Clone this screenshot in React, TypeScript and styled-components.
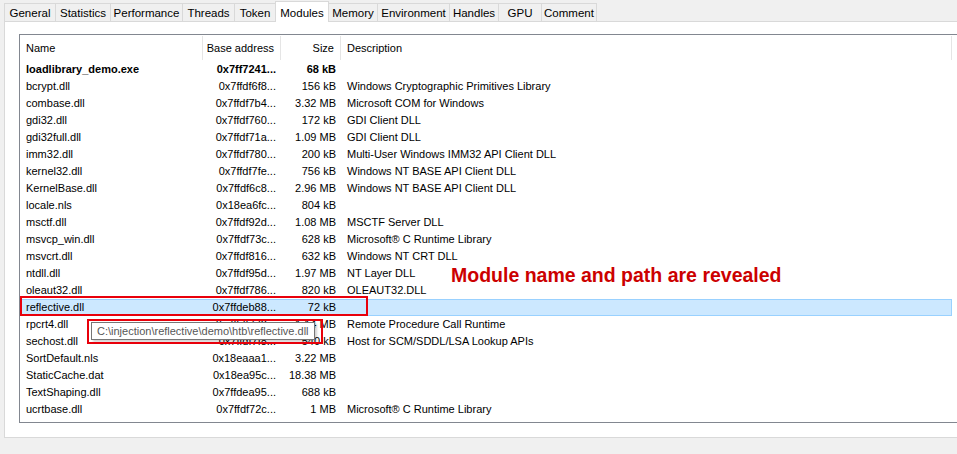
import React from "react";
import styled, { createGlobalStyle } from "styled-components";

const GlobalStyle = createGlobalStyle`
  html, body { margin: 0; padding: 0; background: #f0f0f0; }
  body { font-family: "Liberation Sans", Arial, sans-serif; font-size: 11px; color: #000; }
  * { box-sizing: border-box; }
`;

const Window = styled.div`
  position: relative;
  width: 957px;
  height: 454px;
  overflow: hidden;
  background: #f0f0f0;
`;

const TabStrip = styled.div`
  display: flex;
  align-items: flex-end;
  height: 21px;
  padding-left: 4px;
`;

const Tab = styled.div<{ $w: number; $active?: boolean }>`
  width: ${(p) => p.$w + 1}px;
  height: ${(p) => (p.$active ? 21 : 18)}px;
  margin-right: -1px;
  margin-bottom: ${(p) => (p.$active ? -1 : 0)}px;
  border: 1px solid #d9d9d9;
  border-bottom: none;
  background: ${(p) => (p.$active ? "#ffffff" : "#f0f0f0")};
  position: relative;
  z-index: ${(p) => (p.$active ? 2 : 1)};
  display: flex;
  align-items: ${(p) => (p.$active ? "flex-start" : "center")};
  padding-top: ${(p) => (p.$active ? 5 : 0)}px;
  justify-content: center;
  font-size: 11.5px;
  white-space: nowrap;
`;

const Panel = styled.div`
  margin-left: 4px;
  width: 1000px;
  height: 417px;
  background: #ffffff;
  border: 1px solid #d9d9d9;
  padding: 12px 0 0 14px;
`;

const ListView = styled.div`
  width: 980px;
  height: 389px;
  border: 1px solid #828790;
  background: #ffffff;
`;

const Header = styled.div`
  display: flex;
  height: 26px;
  padding-bottom: 1px;
`;

const HeaderCell = styled.div<{ $w: number; $right?: boolean }>`
  width: ${(p) => p.$w}px;
  flex: none;
  height: 24px;
  margin-top: 1px;
  padding: 0 6px;
  display: flex;
  align-items: center;
  justify-content: ${(p) => (p.$right ? "flex-end" : "flex-start")};
  border-right: 1px solid #e5e5e5;
  white-space: nowrap;
  overflow: hidden;
`;

const Row = styled.div<{ $selected?: boolean; $bold?: boolean }>`
  display: flex;
  width: 932px;
  height: 17px;
  border: 1px solid ${(p) => (p.$selected ? "#99d1ff" : "transparent")};
  background: ${(p) => (p.$selected ? "#cce8ff" : "transparent")};
  font-weight: ${(p) => (p.$bold ? 700 : 400)};
`;

const Cell = styled.div<{ $w: number; $right?: boolean }>`
  width: ${(p) => p.$w}px;
  flex: none;
  padding: 0 ${(p) => (p.$right ? 6 : 5)}px 0 ${(p) => (p.$right ? 0 : 5)}px;
  text-align: ${(p) => (p.$right ? "right" : "left")};
  line-height: 15px;
  white-space: nowrap;
  overflow: hidden;
`;

const Tooltip = styled.div`
  position: absolute;
  left: 91px;
  top: 322px;
  height: 18px;
  padding: 0 5px;
  display: flex;
  align-items: center;
  background: #ffffff;
  border: 1px solid #767676;
  color: #575757;
  font-size: 11px;
  white-space: nowrap;
  box-shadow: 2px 2px 2px rgba(0, 0, 0, 0.18);
  z-index: 5;
`;

const RedBox = styled.div<{ $x: number; $y: number; $w: number; $h: number }>`
  position: absolute;
  left: ${(p) => p.$x}px;
  top: ${(p) => p.$y}px;
  width: ${(p) => p.$w}px;
  height: ${(p) => p.$h}px;
  border: 2px solid #e8000b;
  z-index: 6;
  pointer-events: none;
`;

const Annotation = styled.div`
  position: absolute;
  left: 451px;
  top: 264px;
  font-family: "Liberation Sans", Arial, sans-serif;
  font-weight: 700;
  font-size: 19.5px;
  color: #cc0000;
  white-space: nowrap;
  z-index: 6;
`;

const tabs: [string, number][] = [
  ["General", 51],
  ["Statistics", 55],
  ["Performance", 72],
  ["Threads", 52],
  ["Token", 41],
  ["Modules", 53],
  ["Memory", 49],
  ["Environment", 72],
  ["Handles", 49],
  ["GPU", 43],
  ["Comment", 55],
];

const cols = { name: 183, base: 78, size: 60, desc: 611 };

type Mod = [string, string, string, string];

const modules: Mod[] = [
  ["loadlibrary_demo.exe", "0x7ff7241...", "68 kB", ""],
  ["bcrypt.dll", "0x7ffdf6f8...", "156 kB", "Windows Cryptographic Primitives Library"],
  ["combase.dll", "0x7ffdf7b4...", "3.32 MB", "Microsoft COM for Windows"],
  ["gdi32.dll", "0x7ffdf760...", "172 kB", "GDI Client DLL"],
  ["gdi32full.dll", "0x7ffdf71a...", "1.09 MB", "GDI Client DLL"],
  ["imm32.dll", "0x7ffdf780...", "200 kB", "Multi-User Windows IMM32 API Client DLL"],
  ["kernel32.dll", "0x7ffdf7fe...", "756 kB", "Windows NT BASE API Client DLL"],
  ["KernelBase.dll", "0x7ffdf6c8...", "2.96 MB", "Windows NT BASE API Client DLL"],
  ["locale.nls", "0x18ea6fc...", "804 kB", ""],
  ["msctf.dll", "0x7ffdf92d...", "1.08 MB", "MSCTF Server DLL"],
  ["msvcp_win.dll", "0x7ffdf73c...", "628 kB", "Microsoft® C Runtime Library"],
  ["msvcrt.dll", "0x7ffdf816...", "632 kB", "Windows NT CRT DLL"],
  ["ntdll.dll", "0x7ffdf95d...", "1.97 MB", "NT Layer DLL"],
  ["oleaut32.dll", "0x7ffdf786...", "820 kB", "OLEAUT32.DLL"],
  ["reflective.dll", "0x7ffdeb88...", "72 kB", ""],
  ["rpcrt4.dll", "0x7ffdf7d2...", "1.14 MB", "Remote Procedure Call Runtime"],
  ["sechost.dll", "0x7ffdf7f8...", "540 kB", "Host for SCM/SDDL/LSA Lookup APIs"],
  ["SortDefault.nls", "0x18eaaa1...", "3.22 MB", ""],
  ["StaticCache.dat", "0x18ea95c...", "18.38 MB", ""],
  ["TextShaping.dll", "0x7ffdea95...", "688 kB", ""],
  ["ucrtbase.dll", "0x7ffdf72c...", "1 MB", "Microsoft® C Runtime Library"],
];

export default function App() {
  return (
    <>
      <GlobalStyle />
      <Window>
        <TabStrip>
          {tabs.map(([label, w]) => (
            <Tab key={label} $w={w} $active={label === "Modules"}>
              {label}
            </Tab>
          ))}
        </TabStrip>
        <Panel>
          <ListView>
            <Header>
              <HeaderCell $w={cols.name}>Name</HeaderCell>
              <HeaderCell $w={cols.base} $right>
                Base address
              </HeaderCell>
              <HeaderCell $w={cols.size} $right>
                Size
              </HeaderCell>
              <HeaderCell $w={cols.desc}>Description</HeaderCell>
            </Header>
            {modules.map(([name, base, size, desc], i) => (
              <Row key={name} $bold={i === 0} $selected={name === "reflective.dll"}>
                <Cell $w={cols.name}>{name}</Cell>
                <Cell $w={cols.base} $right>
                  {base}
                </Cell>
                <Cell $w={cols.size} $right>
                  {size}
                </Cell>
                <Cell $w={cols.desc}>{desc}</Cell>
              </Row>
            ))}
          </ListView>
        </Panel>
        <Tooltip>C:\injection\reflective\demo\htb\reflective.dll</Tooltip>
        <RedBox $x={20} $y={296} $w={348} $h={20} />
        <RedBox $x={87} $y={319} $w={236} $h={25} />
        <Annotation>Module name and path are revealed</Annotation>
      </Window>
    </>
  );
}
